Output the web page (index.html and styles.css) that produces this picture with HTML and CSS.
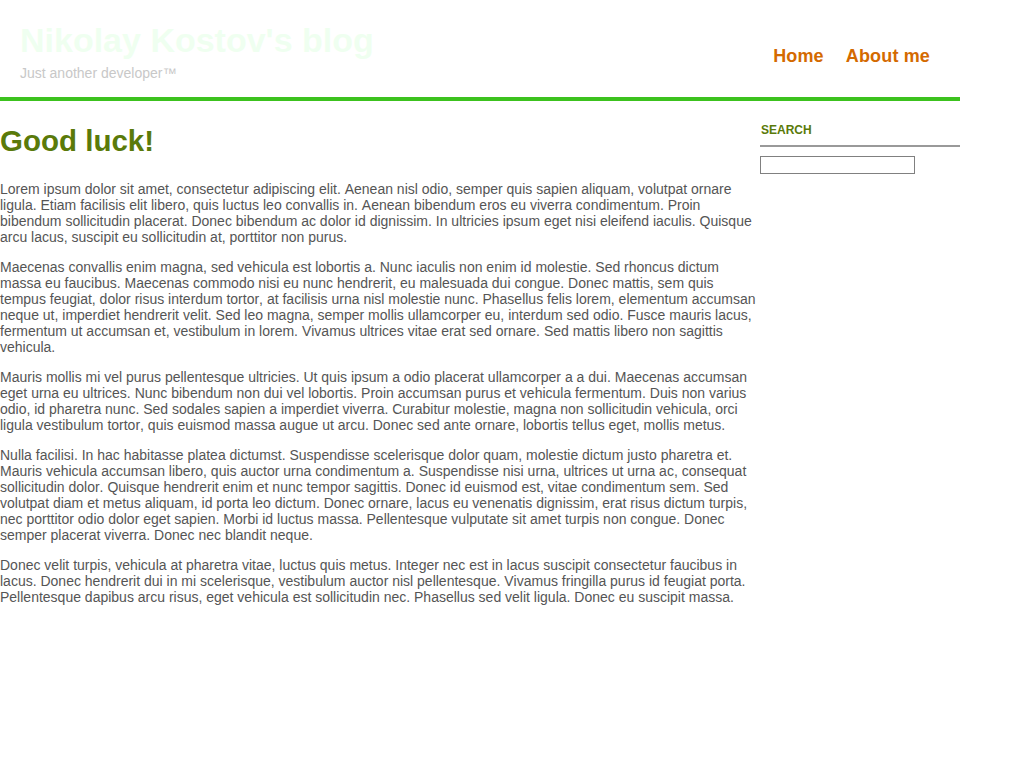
FILE: index.html
```html
<!DOCTYPE html>
<html>
<head>
<meta charset="utf-8">
<title>Nikolay Kostov's blog</title>
<link rel="stylesheet" href="styles.css">
</head>
<body>
<div class="page">
  <header class="site-header">
    <div class="branding">
      <div class="site-title">Nikolay Kostov's blog</div>
      <div class="tagline">Just another developer™</div>
    </div>
    <nav class="nav">
      <a href="#">Home</a>
      <a href="#">About me</a>
    </nav>
  </header>
  <div class="layout">
    <main class="content">
      <h1>Good luck!</h1>
      <p>Lorem ipsum dolor sit amet, consectetur adipiscing elit. Aenean nisl odio, semper quis sapien aliquam, volutpat ornare ligula. Etiam facilisis elit libero, quis luctus leo convallis in. Aenean bibendum eros eu viverra condimentum. Proin bibendum sollicitudin placerat. Donec bibendum ac dolor id dignissim. In ultricies ipsum eget nisi eleifend iaculis. Quisque arcu lacus, suscipit eu sollicitudin at, porttitor non purus.</p>
      <p>Maecenas convallis enim magna, sed vehicula est lobortis a. Nunc iaculis non enim id molestie. Sed rhoncus dictum massa eu faucibus. Maecenas commodo nisi eu nunc hendrerit, eu malesuada dui congue. Donec mattis, sem quis tempus feugiat, dolor risus interdum tortor, at facilisis urna nisl molestie nunc. Phasellus felis lorem, elementum accumsan neque ut, imperdiet hendrerit velit. Sed leo magna, semper mollis ullamcorper eu, interdum sed odio. Fusce mauris lacus, fermentum ut accumsan et, vestibulum in lorem. Vivamus ultrices vitae erat sed ornare. Sed mattis libero non sagittis vehicula.</p>
      <p>Mauris mollis mi vel purus pellentesque ultricies. Ut quis ipsum a odio placerat ullamcorper a a dui. Maecenas accumsan eget urna eu ultrices. Nunc bibendum non dui vel lobortis. Proin accumsan purus et vehicula fermentum. Duis non varius odio, id pharetra nunc. Sed sodales sapien a imperdiet viverra. Curabitur molestie, magna non sollicitudin vehicula, orci ligula vestibulum tortor, quis euismod massa augue ut arcu. Donec sed ante ornare, lobortis tellus eget, mollis metus.</p>
      <p>Nulla facilisi. In hac habitasse platea dictumst. Suspendisse scelerisque dolor quam, molestie dictum justo pharetra et. Mauris vehicula accumsan libero, quis auctor urna condimentum a. Suspendisse nisi urna, ultrices ut urna ac, consequat sollicitudin dolor. Quisque hendrerit enim et nunc tempor sagittis. Donec id euismod est, vitae condimentum sem. Sed volutpat diam et metus aliquam, id porta leo dictum. Donec ornare, lacus eu venenatis dignissim, erat risus dictum turpis, nec porttitor odio dolor eget sapien. Morbi id luctus massa. Pellentesque vulputate sit amet turpis non congue. Donec semper placerat viverra. Donec nec blandit neque.</p>
      <p>Donec velit turpis, vehicula at pharetra vitae, luctus quis metus. Integer nec est in lacus suscipit consectetur faucibus in lacus. Donec hendrerit dui in mi scelerisque, vestibulum auctor nisl pellentesque. Vivamus fringilla purus id feugiat porta. Pellentesque dapibus arcu risus, eget vehicula est sollicitudin nec. Phasellus sed velit ligula. Donec eu suscipit massa.</p>
    </main>
    <aside class="sidebar">
      <h3 class="widget-title">SEARCH</h3>
      <input class="search-input" type="text">
    </aside>
  </div>
</div>
</body>
</html>
```

FILE: styles.css
```css
html, body {
  margin: 0;
  padding: 0;
  background: #fff;
  font-family: "Liberation Sans", Arial, sans-serif;
}

.page {
  width: 960px;
}

.site-header {
  display: flex;
  justify-content: space-between;
  align-items: flex-start;
  height: 97px;
  border-bottom: 4px solid #3cc21e;
  box-sizing: content-box;
}

.branding {
  padding: 21px 0 0 20px;
}

.site-title {
  font-size: 34px;
  font-weight: bold;
  line-height: 38px;
  color: #effff0;
}

.tagline {
  margin-top: 6px;
  font-size: 14px;
  line-height: 16px;
  color: #c8c8c8;
}

.nav {
  display: flex;
  gap: 22px;
  padding: 45px 30px 0 0;
}

.nav a {
  font-size: 18px;
  font-weight: bold;
  line-height: 22px;
  letter-spacing: 0.15px;
  color: #d46a00;
  text-decoration: none;
}

.layout {
  display: flex;
}

.content {
  width: 760px;
}

.content h1 {
  margin: 22px 0 22px;
  font-size: 29.5px;
  line-height: 36px;
  font-weight: bold;
  color: #5a7a0a;
}

.content p {
  margin: 0 0 14px;
  font-size: 14px;
  line-height: 16px;
  font-kerning: none;
  color: #555;
}

.sidebar {
  width: 200px;
  padding-top: 22px;
}

.widget-title {
  margin: 0;
  padding: 0 0 8px 1px;
  font-size: 12px;
  line-height: 14px;
  font-weight: bold;
  color: #5a7a0a;
  border-bottom: 2px solid #999;
}

.search-input {
  display: block;
  margin-top: 9px;
  width: 155px;
  height: 18px;
  box-sizing: border-box;
  border: 1px solid #808080;
  padding: 0;
}
```
